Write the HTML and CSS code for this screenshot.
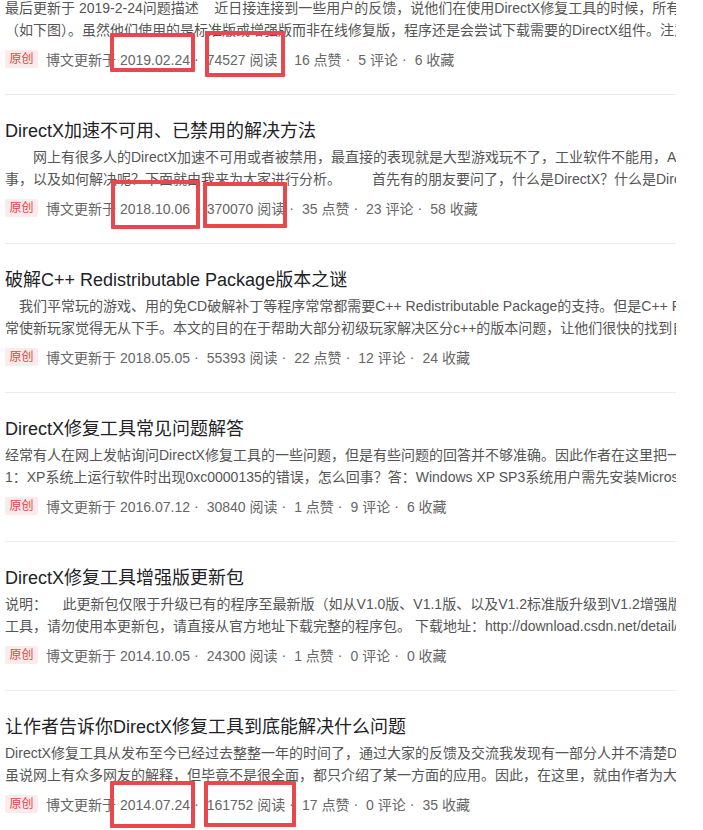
FILE: index.html
```html
<!DOCTYPE html>
<html lang="zh-CN">
<head>
<meta charset="utf-8">
<title>文章列表</title>
<link rel="stylesheet" href="styles.css">
</head>
<body>
<div class="list">
  <div class="item">
    <p class="desc">最后更新于 2019-2-24问题描述&nbsp;&nbsp;&nbsp;&nbsp;近日接连接到一些用户的反馈，说他们在使用DirectX修复工具的时候，所有的文件都显示丢失<br>（如下图）。虽然他们使用的是标准版或增强版而非在线修复版，程序还是会尝试下载需要的DirectX组件。注意</p>
    <div class="meta">
      <span class="badge">原创</span><span>博文更新于 2019.02.24</span><span class="dot">·</span><span>74527 阅读</span><span class="dot">·</span><span>16 点赞</span><span class="dot">·</span><span>5 评论</span><span class="dot">·</span><span>6 收藏</span>
      <span class="mark mark-1a"></span><span class="mark mark-1b"></span>
    </div>
  </div>
  <div class="item">
    <h3 class="title">DirectX加速不可用、已禁用的解决方法</h3>
    <p class="desc">　　网上有很多人的DirectX加速不可用或者被禁用，最直接的表现就是大型游戏玩不了，工业软件不能用，AutoCAD打不开<br>事，以及如何解决呢？下面就由我来为大家进行分析。&nbsp;&nbsp;&nbsp;&nbsp;&nbsp;&nbsp;&nbsp;&nbsp;首先有的朋友要问了，什么是DirectX？什么是DirectX加速</p>
    <div class="meta">
      <span class="badge">原创</span><span>博文更新于 2018.10.06</span><span class="dot">·</span><span>370070 阅读</span><span class="dot">·</span><span>35 点赞</span><span class="dot">·</span><span>23 评论</span><span class="dot">·</span><span>58 收藏</span>
      <span class="mark mark-2a"></span><span class="mark mark-2b"></span>
    </div>
  </div>
  <div class="item">
    <h3 class="title">破解C++ Redistributable Package版本之谜</h3>
    <p class="desc">　我们平常玩的游戏、用的免CD破解补丁等程序常常都需要C++ Redistributable Package的支持。但是C++ Redistributable Package的版本众多<br>常使新玩家觉得无从下手。本文的目的在于帮助大部分初级玩家解决区分c++的版本问题，让他们很快的找到自己需要的版本</p>
    <div class="meta">
      <span class="badge">原创</span><span>博文更新于 2018.05.05</span><span class="dot">·</span><span>55393 阅读</span><span class="dot">·</span><span>22 点赞</span><span class="dot">·</span><span>12 评论</span><span class="dot">·</span><span>24 收藏</span>
    </div>
  </div>
  <div class="item">
    <h3 class="title">DirectX修复工具常见问题解答</h3>
    <p class="desc">经常有人在网上发帖询问DirectX修复工具的一些问题，但是有些问题的回答并不够准确。因此作者在这里把一些常见的问题<br>1：XP系统上运行软件时出现0xc0000135的错误，怎么回事？答：Windows XP SP3系统用户需先安装Microsoft .NET Framework</p>
    <div class="meta">
      <span class="badge">原创</span><span>博文更新于 2016.07.12</span><span class="dot">·</span><span>30840 阅读</span><span class="dot">·</span><span>1 点赞</span><span class="dot">·</span><span>9 评论</span><span class="dot">·</span><span>6 收藏</span>
    </div>
  </div>
  <div class="item">
    <h3 class="title">DirectX修复工具增强版更新包</h3>
    <p class="desc">说明：&nbsp;&nbsp;&nbsp;&nbsp;此更新包仅限于升级已有的程序至最新版（如从V1.0版、V1.1版、以及V1.2标准版升级到V1.2增强版）<br>工具，请勿使用本更新包，请直接从官方地址下载完整的程序包。 下载地址：http://download.csdn.net/detail/vbcom/</p>
    <div class="meta">
      <span class="badge">原创</span><span>博文更新于 2014.10.05</span><span class="dot">·</span><span>24300 阅读</span><span class="dot">·</span><span>1 点赞</span><span class="dot">·</span><span>0 评论</span><span class="dot">·</span><span>0 收藏</span>
    </div>
  </div>
  <div class="item">
    <h3 class="title">让作者告诉你DirectX修复工具到底能解决什么问题</h3>
    <p class="desc">DirectX修复工具从发布至今已经过去整整一年的时间了，通过大家的反馈及交流我发现有一部分人并不清楚DirectX修复工具<br>虽说网上有众多网友的解释，但毕竟不是很全面，都只介绍了某一方面的应用。因此，在这里，就由作者为大家</p>
    <div class="meta">
      <span class="badge">原创</span><span>博文更新于 2014.07.24</span><span class="dot">·</span><span>161752 阅读</span><span class="dot">·</span><span>17 点赞</span><span class="dot">·</span><span>0 评论</span><span class="dot">·</span><span>35 收藏</span>
      <span class="mark mark-6a"></span><span class="mark mark-6b"></span>
    </div>
  </div>
</div>
</body>
</html>
```

FILE: styles.css
```css
* { box-sizing: border-box; }
html { overflow: hidden; background: #fff; }
body {
  margin: 0;
  padding: 0;
  background: #fff;
  font-family: "Liberation Sans", Arial, "Noto Sans CJK SC", sans-serif;
}
.list {
  width: 676px;
  padding-left: 5px;
  margin-top: -30px;
  overflow: hidden;
}
.item {
  padding: 24px 0 23px;
  border-bottom: 1px solid #ececec;
}
.title {
  margin: 0;
  font-size: 18px;
  line-height: 24px;
  font-weight: normal;
  color: #222226;
  white-space: nowrap;
}
.desc {
  margin: 3px 0 0;
  font-size: 14px;
  line-height: 22px;
  color: #555;
  white-space: nowrap;
}
.meta {
  position: relative;
  display: flex;
  align-items: center;
  height: 24px;
  margin-top: 6px;
  font-size: 14px;
  color: #666;
  white-space: nowrap;
}
.badge {
  height: 18px;
  line-height: 18px;
  padding: 0 4.5px;
  margin-right: 8px;
  font-size: 12px;
  color: #e14444;
  background: #fdeaea;
  border-radius: 2px;
}
.dot { margin: 0 8px 0 4px; }
.mark {
  position: absolute;
  border: 4px solid #e8474d;
  border-radius: 1px;
  pointer-events: none;
}
.mark-1a { left: 105px; top: -14px; width: 85px; height: 39px; }
.mark-1b { left: 200px; top: -16px; width: 80px; height: 46px; }
.mark-2a { left: 106px; top: -16px; width: 89px; height: 49px; }
.mark-2b { left: 198px; top: -14px; width: 84px; height: 46px; }
.mark-6a { left: 105px; top: -11px; width: 85px; height: 47px; }
.mark-6b { left: 199px; top: -11px; width: 92px; height: 46px; }
```
